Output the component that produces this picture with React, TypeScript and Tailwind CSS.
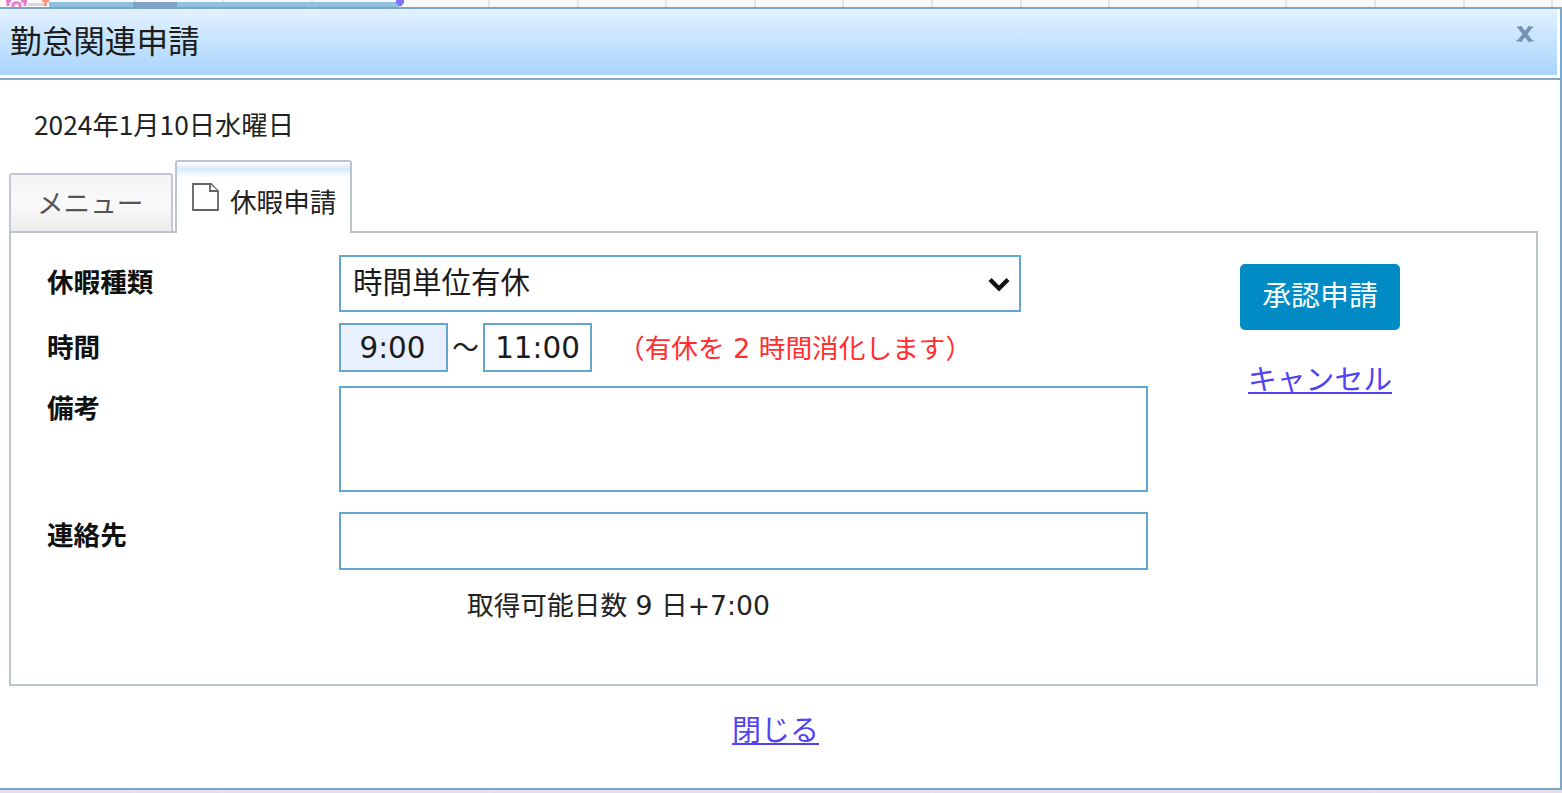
import type { ReactNode } from "react";

const JP = "font-['DejaVu_Sans','Noto_Sans_CJK_JP',sans-serif]";

const GRID_COLUMNS = Array.from({ length: 18 }, (_, i) => i);

function GridLines() {
  return (
    <div className="flex h-full pl-[47px]">
      {GRID_COLUMNS.map((i) => (
        <div key={i} className="h-full w-[88.6px] shrink-0 border-r-2 border-[#e4e4e6]" />
      ))}
    </div>
  );
}

// Sliver of the schedule that stays visible above the dialog
function ScheduleTop() {
  return (
    <div className="relative h-[7px] shrink-0 overflow-hidden bg-[#f9f9f9]">
      <GridLines />
      <svg className="absolute left-0 top-0" width="410" height="7" viewBox="0 0 410 7">
        <rect x="28" y="3" width="16" height="3" fill="#dadada" />
        <rect x="49" y="2" width="350" height="5" fill="#8fc1e1" />
        <rect x="133" y="2" width="44" height="5" fill="#7fa3c8" />
        <path d="M8 0V6M13 7V5C13 2 20 2 20 5V7M25 0V6M6 1H11M21 1H27" fill="none" stroke="#e17fcb" strokeWidth="3" />
        <path d="M42 0H49V2H47V6H44V2H42Z" fill="#ff9381" />
        <path d="M396 0H404V3L402 5V6H398V5L396 3Z" fill="#8074ff" />
      </svg>
    </div>
  );
}

function Label({ className, children }: { className: string; children: ReactNode }) {
  return (
    <div className={`w-[292px] shrink-0 text-[26.6px] font-bold leading-[28px] text-[#111] ${className}`}>
      {children}
    </div>
  );
}

function Header() {
  return (
    <div className="h-[71px] shrink-0 border-b-2 border-[#83a8c9] pr-[3px] pb-[3px]">
      <div className="flex h-[66px] justify-between bg-linear-to-b from-[#e2f1ff] to-[#a9d4fc] pl-[10px] pr-[22px]">
        <h1 className="pt-[16px] text-[31.6px] leading-[34px] text-[#1b1b1b]">勤怠関連申請</h1>
        <button className="mt-[15px] flex h-[20px] w-[20px] items-center justify-center" aria-label="閉じる">
          <svg width="18" height="16" viewBox="0 0 18 16" fill="none" stroke="#7594b3">
            <path d="M3.5 1L14.5 15M14.5 1L3.5 15" strokeWidth="4" />
            <path d="M1 1.2H6M12 1.2H17M0.5 14.8H6M12 14.8H17.5" strokeWidth="1.4" />
          </svg>
        </button>
      </div>
    </div>
  );
}

function Tabs() {
  return (
    <div className="ml-[9px] flex h-[71px] items-end gap-[2px]">
      <button className="flex h-[58px] w-[164px] rounded-t-[3px] border-2 border-b-0 border-[#c2c7d1] bg-linear-to-b from-[#f3f3f3] via-[#fafafa] to-[#ededed] pl-[26px] pt-[15px] text-[26.6px] leading-[28px] text-[#555]">
        メニュー
      </button>
      <button className="relative z-10 flex h-[73px] w-[177px] self-start rounded-t-[3px] border-2 border-b-0 border-[#bdc4d0] bg-white bg-linear-to-b from-white via-[#d7eafb] via-10% to-white to-22% pl-[15px] text-[26.6px] leading-[28px] text-[#222]">
        <svg className="mt-[21px] shrink-0" width="27" height="28" viewBox="0 0 27 28" fill="white" stroke="#626462" strokeWidth="1.8">
          <path d="M1 1H19L26 8V27H1Z" />
          <path d="M18 1V8H26" />
        </svg>
        <span className="ml-[11px] mt-[27px] whitespace-nowrap">休暇申請</span>
      </button>
    </div>
  );
}

function LeaveForm() {
  return (
    <div className="w-[1137px] pl-[36px]">
      <div className="flex pt-[22px]">
        <Label className="pt-[14px]">休暇種類</Label>
        <div className="relative h-[57px] w-[682px]">
          <select className="h-full w-full appearance-none border-2 border-[#64a6d0] bg-white pb-[2px] pl-[12px] text-[29.5px] leading-[34px] text-[#1b1b1b]">
            <option>時間単位有休</option>
          </select>
          <svg className="pointer-events-none absolute right-[11px] top-[22px]" width="22" height="16" viewBox="0 0 22 16" fill="none" stroke="#111" strokeWidth="4.4">
            <path d="M2 2.5L11 11.5L20 2.5" />
          </svg>
        </div>
      </div>

      <div className="mt-[11px] flex h-[49px]">
        <Label className="pt-[11px]">時間</Label>
        <input
          className="h-[49px] w-[109px] border-2 border-[#64a6d0] bg-[#e8f0fd] pr-[2px] text-center text-[29.4px] leading-[34px] text-[#1b1b1b]"
          defaultValue="9:00"
        />
        <span className="w-[35px] text-center text-[26.6px] leading-[49px] text-[#222]">～</span>
        <input
          className="h-[49px] w-[109px] border-2 border-[#64a6d0] bg-white text-center text-[29.4px] leading-[34px] text-[#1b1b1b]"
          defaultValue="11:00"
        />
        <span className="ml-[26px] whitespace-nowrap text-[26.7px] leading-[52px] text-[#ff2f2f]">
          （有休を 2 時間消化します）
        </span>
      </div>

      <div className="mt-[14px] flex">
        <Label className="pt-[9px]">備考</Label>
        <textarea className="h-[106px] w-[809px] resize-none border-2 border-[#64a6d0] bg-white" />
      </div>

      <div className="mt-[20px] flex">
        <Label className="pt-[10px]">連絡先</Label>
        <input className="h-[58px] w-[809px] border-2 border-[#64a6d0] bg-white" />
      </div>

      <p className="ml-[420px] mt-[20px] text-[26.7px] leading-[32px] text-[#222]">取得可能日数 9 日+7:00</p>
    </div>
  );
}

export default function App() {
  return (
    <div className={`flex h-[793px] w-[1562px] flex-col overflow-hidden bg-[#e4e6ea] ${JP}`}>
      <ScheduleTop />
      <div className="flex h-[783px] shrink-0 flex-col border-2 border-l-0 border-[#7fa5c7] bg-white">
        <Header />
        <p className="h-[80px] pl-[34px] pt-[30px] font-['Noto_Sans_CJK_JP',sans-serif] text-[26.3px] leading-[28px] text-[#222]">
          2024年1月10日水曜日
        </p>
        <Tabs />
        <div className="ml-[9px] flex h-[455px] w-[1529px] border-2 border-[#bdc4d0]">
          <LeaveForm />
          <div className="ml-[92px] flex w-[160px] flex-col items-center pt-[31px]">
            <button className="h-[66px] w-[160px] rounded-[5px] bg-[#008bc4] pb-[2px] text-[28.9px] leading-[34px] text-white">
              承認申請
            </button>
            <a className="mt-[33px] whitespace-nowrap text-[28.8px] leading-[34px] text-[#5142f5] underline decoration-2 underline-offset-[2px]">
              キャンセル
            </a>
          </div>
        </div>
        <div className="flex w-[1551px] justify-center pt-[28px]">
          <a className="text-[29px] leading-[34px] text-[#5142f5] underline decoration-2 underline-offset-[2px]">閉じる</a>
        </div>
      </div>
      <div className="h-[3px] shrink-0 overflow-hidden bg-[#dfe1e6]">
        <GridLines />
      </div>
    </div>
  );
}
